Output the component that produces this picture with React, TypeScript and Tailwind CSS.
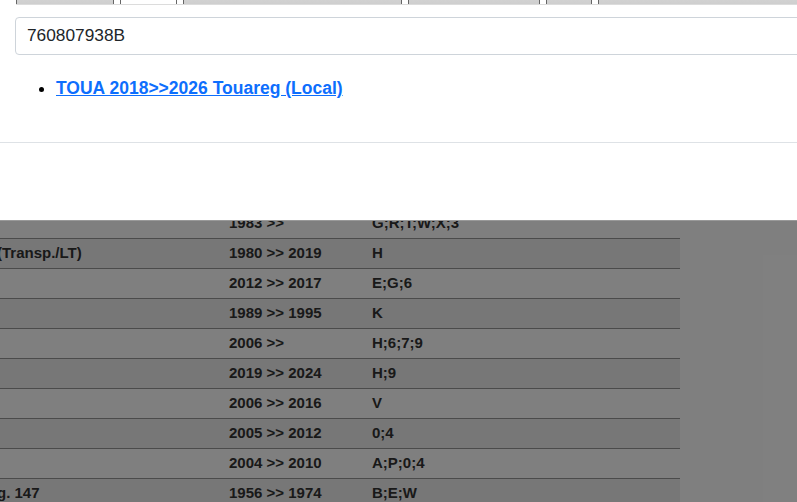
import React from "react";

const rows: { a: string; b: string; c: string }[] = [
  { a: "", b: "1983 >>", c: "G;R;T;W;X;3" },
  { a: "(Transp./LT)", b: "1980 >> 2019", c: "H" },
  { a: "", b: "2012 >> 2017", c: "E;G;6" },
  { a: "", b: "1989 >> 1995", c: "K" },
  { a: "", b: "2006 >>", c: "H;6;7;9" },
  { a: "", b: "2019 >> 2024", c: "H;9" },
  { a: "", b: "2006 >> 2016", c: "V" },
  { a: "", b: "2005 >> 2012", c: "0;4" },
  { a: "", b: "2004 >> 2010", c: "A;P;0;4" },
  { a: "g. 147", b: "1956 >> 1974", c: "B;E;W" },
];

const tabs = [
  { w: "w-[98px]", active: false },
  { w: "w-[57px]", active: true },
  { w: "w-[219px]", active: false },
  { w: "w-[132px]", active: false },
  { w: "w-[46px]", active: false },
  { w: "w-[300px]", active: false },
];

export default function App() {
  return (
    <div
      className="relative h-[502px] w-[797px] overflow-hidden bg-white"
      style={{ fontFamily: '"Liberation Sans", Arial, sans-serif' }}
    >
      {/* underlying page */}
      <div className="pt-[208px]">
        <div className="-ml-[3px] flex w-[683px] flex-col text-[15px] font-bold text-[#333]">
          {rows.map((r, i) => (
            <div
              key={i}
              className={
                "grid h-[30px] grid-cols-[232px_143px_1fr] items-center border-t border-[#979797] " +
                (i % 2 === 1 ? "bg-[#eeeeee]" : "bg-white")
              }
            >
              <div className="whitespace-nowrap">{r.a}</div>
              <div className="whitespace-nowrap">{r.b}</div>
              <div className="whitespace-nowrap">{r.c}</div>
            </div>
          ))}
        </div>
      </div>

      {/* overlay */}
      <div className="absolute inset-0 bg-black/50" />

      {/* modal */}
      <div className="absolute left-0 top-0 w-[1000px] border-b border-black/40 bg-white">
        <div className="px-[15px]">
          <div className="ml-px flex h-[5px] items-end gap-[6px] overflow-hidden border-b border-[#dcdcdc]">
            {tabs.map((t, i) => (
              <div
                key={i}
                className={
                  "h-[40px] shrink-0 border-x border-[#666] " +
                  t.w +
                  " " +
                  (t.active ? "bg-white" : "bg-gradient-to-b from-[#e8e8e8] to-[#cfcfcf]")
                }
              />
            ))}
          </div>
          <div className="mt-[12px] flex h-[38px] w-[900px] items-center rounded-[4px] border border-[#ced4da] px-[11px] text-[17.3px] text-[#212529]">
            760807938B
          </div>
          <ul className="mt-[21px] list-disc pb-[42px] pl-[41px] text-[17.5px] leading-[24px]">
            <li className="marker:text-black">
              <a href="#" className="font-bold text-[#0d6efd] underline">
                TOUA 2018&gt;&gt;2026 Touareg (Local)
              </a>
            </li>
          </ul>
        </div>
        <div className="h-[78px] border-t border-[#dee2e6]" />
      </div>
    </div>
  );
}
